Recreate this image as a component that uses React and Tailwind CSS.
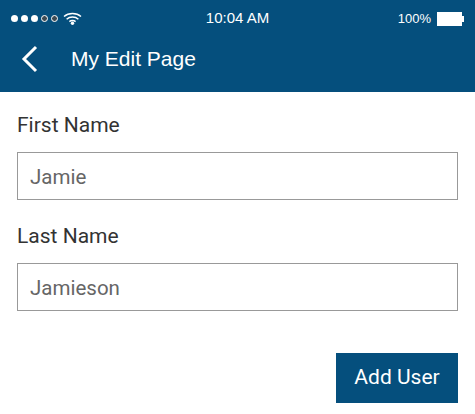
import React from 'react';

function StatusBar() {
  return (
    <div className="flex items-center justify-between h-[37px] pl-[11px] pr-[11px] text-white font-['Liberation_Sans',sans-serif]">
      {/* Signal + wifi */}
      <div className="flex-1 flex items-center">
        <div className="flex items-center gap-[3px]">
          <span className="w-[7px] h-[7px] rounded-full bg-white" />
          <span className="w-[7px] h-[7px] rounded-full bg-white" />
          <span className="w-[7px] h-[7px] rounded-full bg-white" />
          <span className="w-[7px] h-[7px] rounded-full border border-white bg-[#3d4a52]" />
          <span className="w-[7px] h-[7px] rounded-full border border-white bg-[#3d4a52]" />
        </div>
        <svg className="ml-[5px]" width="19" height="13" viewBox="0 0 19 13" fill="none" stroke="white" strokeWidth="1.4">
          <path d="M1 4.6 C5.6 0.4 13.4 0.4 18 4.6" />
          <path d="M3.6 7.2 C6.8 4.2 12.2 4.2 15.4 7.2" />
          <path d="M6.4 9.6 C8 8.2 11 8.2 12.6 9.6" />
          <circle cx="9.5" cy="11.2" r="1.7" fill="white" stroke="none" />
        </svg>
      </div>
      <div className="text-[15px] mt-[-1px]">10:04 AM</div>
      {/* Battery */}
      <div className="flex-1 flex items-center justify-end">
        <span className="text-[13px] mr-[6px]">100%</span>
        <span className="w-[25px] h-[14px] bg-white" />
        <span className="w-[2px] h-[6px] bg-white" />
      </div>
    </div>
  );
}

export default function App() {
  return (
    <div className="w-[475px] h-[414px] bg-white overflow-hidden font-['Roboto',sans-serif]">
      <div className="bg-[#054f7d] h-[92px]">
        <StatusBar />
        {/* Title row */}
        <div className="flex items-center h-[44px] pl-[21px]">
          <svg width="17" height="28" viewBox="0 0 17 28" fill="none" stroke="white" strokeWidth="3">
            <path d="M15 2 L3 14 L15 26" />
          </svg>
          <h1 className="ml-[33px] text-[21px] text-white font-['Liberation_Sans',sans-serif]">My Edit Page</h1>
        </div>
      </div>

      <div className="px-[17px] pt-[21px]">
        <label className="block text-[21px] leading-[24px] text-[#333333]">First Name</label>
        <input
          readOnly
          value="Jamie"
          className="block w-full h-[48px] mt-[15px] px-[12px] pt-[2px] border border-[#999999] text-[20.5px] text-[#666666] outline-none"
        />
        <label className="block mt-[24px] text-[21px] leading-[24px] text-[#333333]">Last Name</label>
        <input
          readOnly
          value="Jamieson"
          className="block w-full h-[48px] mt-[15px] px-[12px] pt-[2px] border border-[#999999] text-[20.5px] text-[#666666] outline-none"
        />
        <div className="flex justify-end mt-[42px]">
          <button className="w-[122px] h-[50px] bg-[#054f7d] text-white text-[21px]">Add User</button>
        </div>
      </div>
    </div>
  );
}
